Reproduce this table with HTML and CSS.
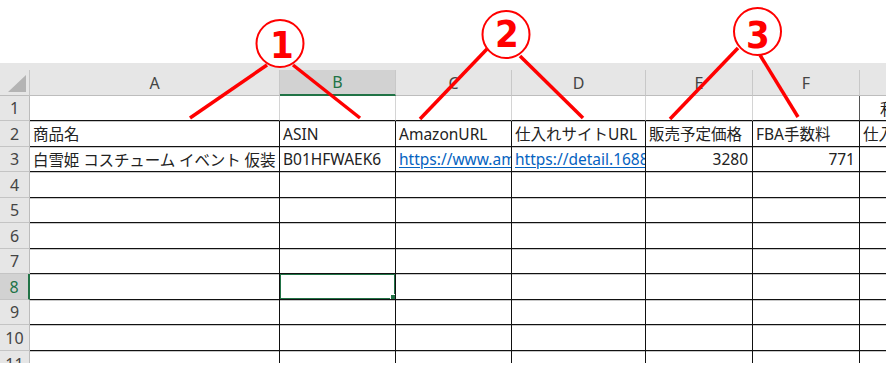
FILE: index.html
```html
<!DOCTYPE html>
<html lang="ja">
<head>
    <meta charset="UTF-8">
    <meta name="viewport" content="width=device-width, initial-scale=1.0">
    <title>仕入れリスト</title>
    <link rel="stylesheet" href="styles.css">
</head>
<body>
    <div class="page">
        <div class="sheet">
            <div class="band"></div>
            <div class="grid">
                <!-- 列見出し -->
                <div class="corner"><span class="corner-mark"></span></div>
                <div class="hd">A</div>
                <div class="hd active">B</div>
                <div class="hd">C</div>
                <div class="hd">D</div>
                <div class="hd">E</div>
                <div class="hd">F</div>
                <div class="hd last"></div>

                <!-- 1行目 -->
                <div class="rh">1</div>
                <div class="c"></div>
                <div class="c"></div>
                <div class="c"></div>
                <div class="c"></div>
                <div class="c"></div>
                <div class="c edge"></div>
                <div class="c last title">利益</div>

                <!-- 2行目: 見出し -->
                <div class="rh">2</div>
                <div class="d">商品名</div>
                <div class="d">ASIN</div>
                <div class="d">AmazonURL</div>
                <div class="d">仕入れサイトURL</div>
                <div class="d">販売予定価格</div>
                <div class="d">FBA手数料</div>
                <div class="d last">仕入れ値</div>

                <!-- 3行目: データ -->
                <div class="rh">3</div>
                <div class="d name">白雪姫 コスチューム イベント 仮装 変装 ドレス</div>
                <div class="d">B01HFWAEK6</div>
                <div class="d link">https://www.amazon.co.jp/dp/B01HFWAEK6</div>
                <div class="d link">https://detail.1688.com/offer/5412</div>
                <div class="d num">3280</div>
                <div class="d num">771</div>
                <div class="d last"></div>
            </div>
            <div class="grid" id="emptyRows"></div>
        </div>

        <!-- 注釈の丸数字と引き出し線 -->
        <svg class="callouts" width="886" height="385" viewBox="0 0 886 385">
            <g class="leader">
                <line x1="267" y1="65" x2="190" y2="118" />
                <line x1="293" y1="65" x2="360" y2="118" />
                <line x1="487" y1="49" x2="420" y2="119" />
                <line x1="520" y1="56" x2="583" y2="118" />
                <line x1="738" y1="48" x2="670" y2="119" />
                <line x1="760" y1="55" x2="798" y2="117" />
            </g>
            <g class="badge">
                <circle cx="280" cy="43.5" r="23.5" />
                <text x="282" y="58">1</text>
                <circle cx="506" cy="34.5" r="23.5" />
                <text x="507" y="47">2</text>
                <circle cx="757.5" cy="31.5" r="23.5" />
                <text x="758" y="48">3</text>
            </g>
        </svg>
    </div>

    <script>
        // 4行目以降の空行を作る（8行目のB列が選択中）
        const rows = document.getElementById('emptyRows');
        for (let r = 4; r <= 11; r++) {
            const head = document.createElement('div');
            head.className = r === 8 ? 'rh active' : 'rh';
            head.textContent = r;
            rows.appendChild(head);
            for (let c = 0; c < 7; c++) {
                const cell = document.createElement('div');
                cell.className = c === 6 ? 'd last' : 'd';
                if (r === 8 && c === 1) {
                    const sel = document.createElement('span');
                    sel.className = 'selection';
                    cell.appendChild(sel);
                }
                rows.appendChild(cell);
            }
        }
    </script>
</body>
</html>
```

FILE: styles.css
```css
:root {
    --head-bg: #e6e6e6;
    --head-active: #d2d2d2;
    --excel-green: #217346;
    --grid-line: #d4d4d4;
    --rule: #111;
    --link: #0563c1;
    --mark: #ff0000;
}

* {
    box-sizing: border-box;
    margin: 0;
    padding: 0;
}

body {
    background: #fff;
    font-family: "Noto Sans", "Noto Sans CJK JP", sans-serif;
    color: #222;
    overflow: hidden;
}

.page {
    position: relative;
    width: 886px;
    height: 385px;
    padding-top: 63px;
}

.sheet {
    height: 300px;
    overflow: hidden;
}

.band {
    height: 7px;
    background: var(--head-bg);
}

.grid {
    display: grid;
    grid-template-columns: 30px 250px 116px 116px 134px 107px 107px 1fr;
    grid-template-rows: 26px 25px 26px 25px;
}

#emptyRows {
    grid-template-rows: 26px 25px 26px 25px 26px 25px 26px 26px;
}

.grid > div {
    position: relative;
    white-space: nowrap;
    overflow: hidden;
    font-size: 15.5px;
    display: flex;
    align-items: center;
}

/* 見出し */
.corner {
    background: var(--head-bg);
    border-right: 1px solid #c6c6c6;
    border-bottom: 1px solid #bdbdbd;
}

.corner-mark {
    position: absolute;
    right: 3px;
    bottom: 3px;
    width: 0;
    height: 0;
    border-left: 18px solid transparent;
    border-bottom: 17px solid #b4b4b4;
}

.hd {
    background: var(--head-bg);
    border-right: 1px solid #c8c8c8;
    border-bottom: 1px solid #bdbdbd;
    justify-content: center;
    color: #444;
    font-size: 16px !important;
}

.hd.active {
    background: var(--head-active);
    color: var(--excel-green);
    border-bottom: 2px solid var(--excel-green);
}

.hd.last {
    border-right: none;
}

.rh {
    background: var(--head-bg);
    border-right: 1px solid #bcbcbc;
    border-bottom: 1px solid #c4c4c4;
    justify-content: center;
    color: #444;
    font-size: 16px !important;
}

.rh.active {
    background: var(--head-active);
    color: var(--excel-green);
    border-right: 2px solid var(--excel-green);
}

/* セル */
.c {
    border-right: 1px solid var(--grid-line);
    border-bottom: 1px solid var(--rule);
    padding: 0 3px;
}

.c.edge {
    border-right: 1px solid #555;
}

.c.title {
    padding-left: 20px;
}

.d {
    border-right: 1px solid var(--rule);
    border-bottom: 1px solid var(--rule);
    box-shadow: inset 0 1px 0 #c8c8c8;
    padding: 0 3px;
}

.d.name {
    letter-spacing: -0.1px;
}

.d.last,
.c.last {
    border-right: none;
}

.link {
    color: var(--link);
    text-decoration: underline;
    text-underline-offset: 2px;
}

.num {
    justify-content: flex-end;
    padding-right: 4px;
}

.selection {
    position: absolute;
    left: -1px;
    top: -1px;
    right: -1px;
    bottom: -1px;
    border: 2px solid var(--excel-green);
}

.selection::after {
    content: "";
    position: absolute;
    right: -4px;
    bottom: -4px;
    width: 6px;
    height: 6px;
    background: var(--excel-green);
    border: 1px solid #fff;
}

/* 注釈 */
.callouts {
    position: absolute;
    left: 0;
    top: 0;
    pointer-events: none;
}

.leader line {
    stroke: var(--mark);
    stroke-width: 3.5;
}

.badge circle {
    fill: #fff;
    stroke: var(--mark);
    stroke-width: 2;
}

.badge text {
    fill: var(--mark);
    font-family: "DejaVu Sans Condensed", "DejaVu Sans", sans-serif;
    font-weight: bold;
    font-size: 38px;
    text-anchor: middle;
}
```
